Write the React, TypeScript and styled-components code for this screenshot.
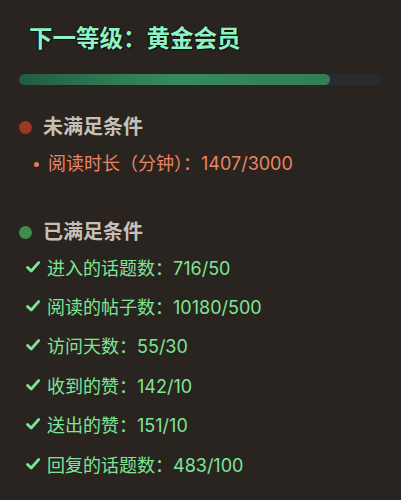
import styled, { createGlobalStyle } from 'styled-components'

const GlobalStyle = createGlobalStyle`
  html, body {
    margin: 0;
    padding: 0;
    background: #29241f;
  }
  body {
    font-family: Inter, "Noto Sans CJK SC", sans-serif;
  }
`

const unmet = [{ label: '阅读时长（分钟）：', value: '1407/3000' }]

const met = [
  { label: '进入的话题数：', value: '716/50' },
  { label: '阅读的帖子数：', value: '10180/500' },
  { label: '访问天数：', value: '55/30' },
  { label: '收到的赞：', value: '142/10' },
  { label: '送出的赞：', value: '151/10' },
  { label: '回复的话题数：', value: '483/100' },
]

const progress = (330 - 19) / (382 - 19)

function Check () {
  return (
    <CheckIcon viewBox="0 0 14 12">
      <path d="M1.6 6.4 L5.2 10 L12.6 1.6" fill="none" stroke="#7ee596" strokeWidth="2.8" strokeLinecap="round" strokeLinejoin="round" />
    </CheckIcon>
  )
}

export default function App () {
  return (
    <>
      <GlobalStyle />
      <Page>
        <Title>下一等级：黄金会员</Title>
        <Track>
          <Fill style={{ width: `${progress * 100}%` }} />
        </Track>

        <Header>
          <Dot color="#9a3a22" />
          未满足条件
        </Header>
        <List>
          {unmet.map(item => (
            <UnmetRow key={item.label}>
              <SmallDot />
              {item.label}{item.value}
            </UnmetRow>
          ))}
        </List>

        <Header $gap>
          <Dot color="#3f8d4c" />
          已满足条件
        </Header>
        <List>
          {met.map(item => (
            <MetRow key={item.label}>
              <Check />
              {item.label}{item.value}
            </MetRow>
          ))}
        </List>
      </Page>
    </>
  )
}

const Page = styled.div`
  display: flex;
  flex-direction: column;
  padding: 24px 19px 0 19px;
  height: 500px;
  box-sizing: border-box;
`

const Title = styled.div`
  margin-left: 10px;
  font-size: 23.5px;
  line-height: 30px;
  font-weight: 700;
  color: #8ef3c4;
  text-shadow: 1px 1px 1px #0e0d0b, -1px 0 1px #0e0d0b;
`

const Track = styled.div`
  margin-top: 20px;
  height: 11px;
  border-radius: 6px;
  background: #2a2b2e;
  overflow: hidden;
`

const Fill = styled.div`
  height: 100%;
  border-radius: 6px;
  background: linear-gradient(90deg, #245b42 0%, #2f7a54 30%, #368a5e 50%, #317e57 100%);
`

const Header = styled.div<{ $gap?: boolean }>`
  display: flex;
  align-items: center;
  gap: 11px;
  margin-top: ${p => (p.$gap ? '38px' : '27px')};
  font-size: 20px;
  line-height: 30px;
  font-weight: 600;
  color: #c5c1b9;
`

const Dot = styled.span<{ color: string }>`
  width: 13px;
  height: 13px;
  border-radius: 50%;
  background: ${p => p.color};
  flex: none;
`

const List = styled.div`
  display: flex;
  flex-direction: column;
`

const UnmetRow = styled.div`
  display: flex;
  align-items: center;
  gap: 9px;
  margin-top: 7px;
  padding-left: 15px;
  font-size: 18px;
  line-height: 30px;
  color: #ec8462;
`

const SmallDot = styled.span`
  width: 5px;
  height: 5px;
  border-radius: 50%;
  background: #e57b58;
  flex: none;
`

const MetRow = styled.div`
  display: flex;
  align-items: center;
  gap: 7px;
  padding-left: 7px;
  height: 39.4px;
  font-size: 18px;
  color: #7ee596;
`

const CheckIcon = styled.svg`
  width: 14px;
  height: 12px;
  flex: none;
`
